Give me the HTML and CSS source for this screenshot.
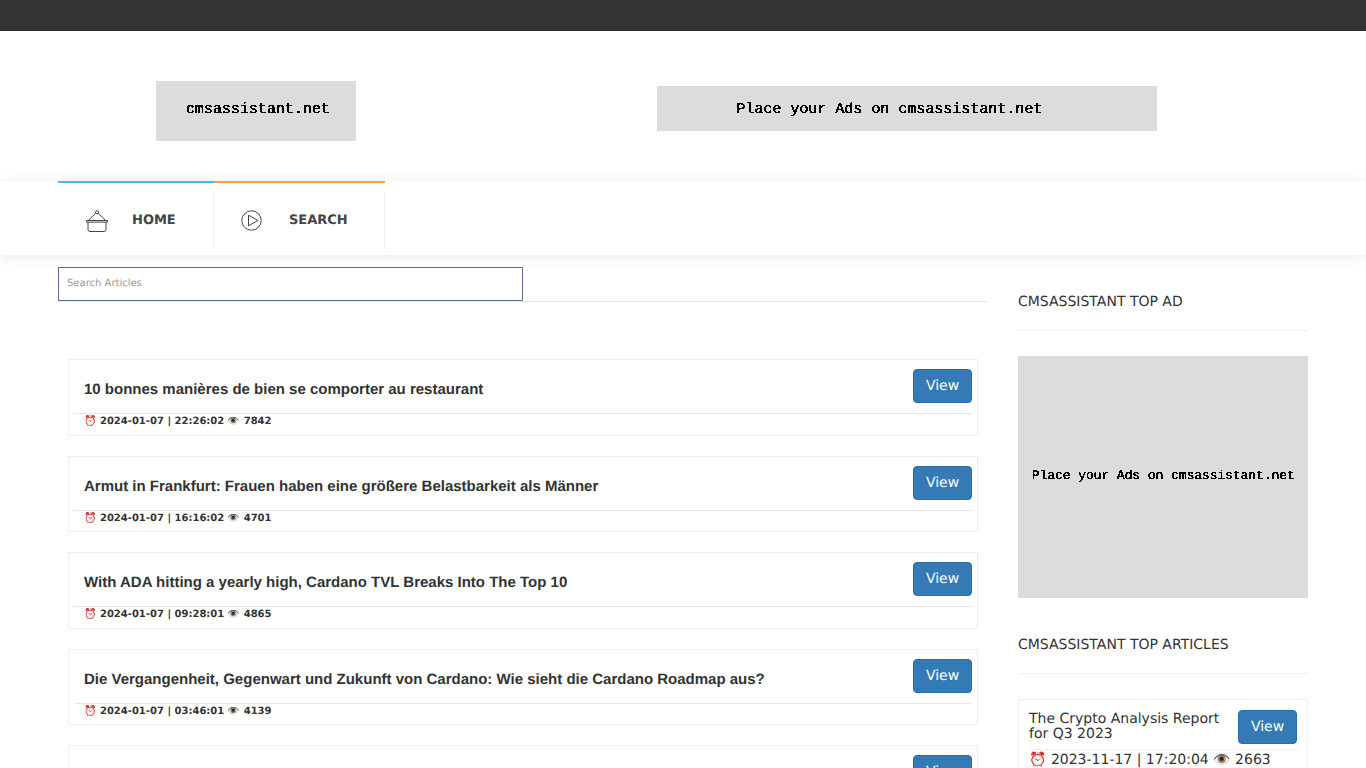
FILE: index.html
```html
<!DOCTYPE html>
<html lang="en">
<head>
<meta charset="utf-8">
<title>cmsassistant.net</title>
<link rel="stylesheet" href="styles.css">
</head>
<body>
<svg class="defs" width="0" height="0" aria-hidden="true">
  <filter id="aliased" color-interpolation-filters="sRGB" x="0" y="0" width="100%" height="100%">
    <feComponentTransfer>
      <feFuncA type="discrete" tableValues="0 1"/>
    </feComponentTransfer>
  </filter>
</svg>
<div class="topbar"></div>
<header class="header">
  <div class="logo-wrap"><div class="ph logo"><span class="px">cmsassistant.net</span></div></div>
  <div class="ad-wrap"><div class="ph ad"><span class="px">Place your Ads on cmsassistant.net</span></div></div>
</header>
<nav class="nav">
  <div class="nav-inner">
    <a class="nav-item home" href="#">
      <span class="nav-cell">
        <svg class="nav-icon" width="22" height="22" viewBox="0 0 22 22" fill="none" stroke="#444" stroke-width="1">
          <circle cx="11" cy="2.2" r="1.5"/>
          <path d="M9.8 3.2 2.2 10.5M12.2 3.2l7.6 7.3"/>
          <path d="M.5 10.5h21v1.6H.5z"/>
          <path d="M2 12.1v7.4a2 2 0 0 0 2 2h14a2 2 0 0 0 2-2v-7.4"/>
        </svg>
        <span>HOME</span>
      </span>
    </a>
    <a class="nav-item search" href="#">
      <span class="nav-cell">
        <svg class="nav-icon" width="21" height="21" viewBox="0 0 21 21" fill="none" stroke="#444" stroke-width="1">
          <circle cx="10.5" cy="10.5" r="9.7"/>
          <path d="M7.5 5.2v10.6l9.5-5.3z"/>
        </svg>
        <span>SEARCH</span>
      </span>
    </a>
  </div>
</nav>
<div class="container">
  <main class="main">
    <div class="search-row"><input class="search-input" type="text" placeholder="Search Articles"></div>
    <div class="list">
      <article class="card">
        <div class="card-top"><h3 class="card-title">10 bonnes manières de bien se comporter au restaurant</h3><a class="btn" href="#">View</a></div>
        <p class="meta">⏰ 2024-01-07 | 22:26:02 👁️ 7842</p>
      </article>
      <article class="card">
        <div class="card-top"><h3 class="card-title">Armut in Frankfurt: Frauen haben eine größere Belastbarkeit als Männer</h3><a class="btn" href="#">View</a></div>
        <p class="meta">⏰ 2024-01-07 | 16:16:02 👁️ 4701</p>
      </article>
      <article class="card">
        <div class="card-top"><h3 class="card-title">With ADA hitting a yearly high, Cardano TVL Breaks Into The Top 10</h3><a class="btn" href="#">View</a></div>
        <p class="meta">⏰ 2024-01-07 | 09:28:01 👁️ 4865</p>
      </article>
      <article class="card">
        <div class="card-top"><h3 class="card-title">Die Vergangenheit, Gegenwart und Zukunft von Cardano: Wie sieht die Cardano Roadmap aus?</h3><a class="btn" href="#">View</a></div>
        <p class="meta">⏰ 2024-01-07 | 03:46:01 👁️ 4139</p>
      </article>
      <article class="card">
        <div class="card-top"><h3 class="card-title"></h3><a class="btn" href="#">View</a></div>
      </article>
    </div>
  </main>
  <aside class="side">
    <h4 class="side-title">CMSASSISTANT TOP AD</h4>
    <div class="ph side-ad"><span class="px">Place your Ads on cmsassistant.net</span></div>
    <h4 class="side-title second">CMSASSISTANT TOP ARTICLES</h4>
    <div class="side-card">
      <div class="side-top"><span class="side-name">The Crypto Analysis Report for Q3 2023</span><a class="btn" href="#">View</a></div>
      <p class="side-meta">⏰ 2023-11-17 | 17:20:04 👁️ 2663</p>
    </div>
  </aside>
</div>
</body>
</html>
```
FILE: styles.css
```css
* { box-sizing: border-box; }
html, body { margin: 0; padding: 0; }
body { background: #fff; font-family: "DejaVu Sans", sans-serif; color: #333; height: 768px; overflow: hidden; text-rendering: geometricPrecision; }
a { text-decoration: none; }
.defs { display: block; height: 0; }
.topbar { height: 31px; background: #333; }
.header { height: 150px; display: flex; padding-left: 58px; }
.logo-wrap { width: 396px; padding: 50px 0 0 98px; }
.ad-wrap { padding: 55px 0 0 203px; }
.ph { background: #dcdcdc; color: #000; font-family: "Liberation Mono", monospace; display: flex; align-items: center; justify-content: center; font-size: 15px; }
.px { filter: url(#aliased); text-shadow: .7px 0 0 #000; padding: 4px 2px; white-space: nowrap; }
.logo { width: 200px; height: 60px; padding: 0 0 3px 3px; }
.ad { width: 500px; height: 45px; padding: 1px 36px 0 0; }
.nav { height: 74px; background: #fff; box-shadow: 0 2px 12px rgba(0,0,0,.09); position: relative; }
.nav-inner { display: flex; padding-left: 58px; height: 74px; }
.nav-item { display: block; border-top: 2px solid #4db6e4; height: 68px; color: #444; font-size: 13px; font-weight: 700; }
.nav-cell { display: flex; align-items: center; height: 57px; margin-top: 9px; border-right: 1px solid #eee; padding-left: 28px; }
.home { width: 156px; }
.home .nav-cell { gap: 24px; }
.search { width: 171px; border-top-color: #f9a233; }
.search .nav-cell { gap: 27px; padding-left: 27px; }
.container { display: flex; gap: 30px; padding: 12px 58px 0; }
.main { width: 930px; }
.search-row { border-bottom: 1px solid #e8e8e8; height: 35px; }
.search-input { width: 465px; height: 34px; border: 1px solid #5b7091; padding: 0 8px 2px; font-family: "DejaVu Sans", sans-serif; font-size: 10px; outline: none; display: block; text-rendering: geometricPrecision; }
.search-input::placeholder { color: #999; opacity: 1; }
.list { padding: 57px 10px 0; display: flex; flex-direction: column; gap: 20px; }
.card { border: 1px solid #eee; height: 76.5px; padding: 0 5px; flex: none; }
.card-top { display: flex; justify-content: space-between; align-items: flex-start; height: 54px; border-bottom: 1px solid #e3e6f0; padding: 9px 0 0 10px; }
.card-title { margin: 12px 0 0; font-family: "Liberation Sans", sans-serif; font-size: 15px; font-weight: 700; line-height: 18px; color: #333; }
.btn { display: block; flex: none; width: 59px; height: 34px; background: #337ab7; border: 1px solid #2e6da4; border-radius: 4px; color: #fff; font-size: 14px; line-height: 32px; text-align: center; }
.meta { margin: 0; padding: 1px 0 0 10px; font-size: 10px; font-weight: 700; line-height: 14px; color: #333; }
.side { width: 290px; }
.side-title { margin: 0; padding-top: 27px; height: 64px; border-bottom: 1px solid #eee; font-size: 14px; font-weight: 400; line-height: 16px; color: #333; }
.side-ad { width: 290px; height: 242px; margin-top: 25px; border: 1px solid #ddd; font-size: 12.9px; padding-bottom: 4px; }
.second { margin-top: 12px; }
.side-card { border: 1px solid #eee; margin-top: 25px; padding: 10px 10px 30px; }
.side-top { display: flex; justify-content: space-between; align-items: flex-start; gap: 10px; border-bottom: 1px solid #eee; padding-bottom: 5px; }
.side-name { font-size: 14px; line-height: 15px; color: #333; padding-top: 2px; }
.side-meta { margin: 0; font-size: 14px; line-height: 20px; color: #333; white-space: nowrap; }
```
